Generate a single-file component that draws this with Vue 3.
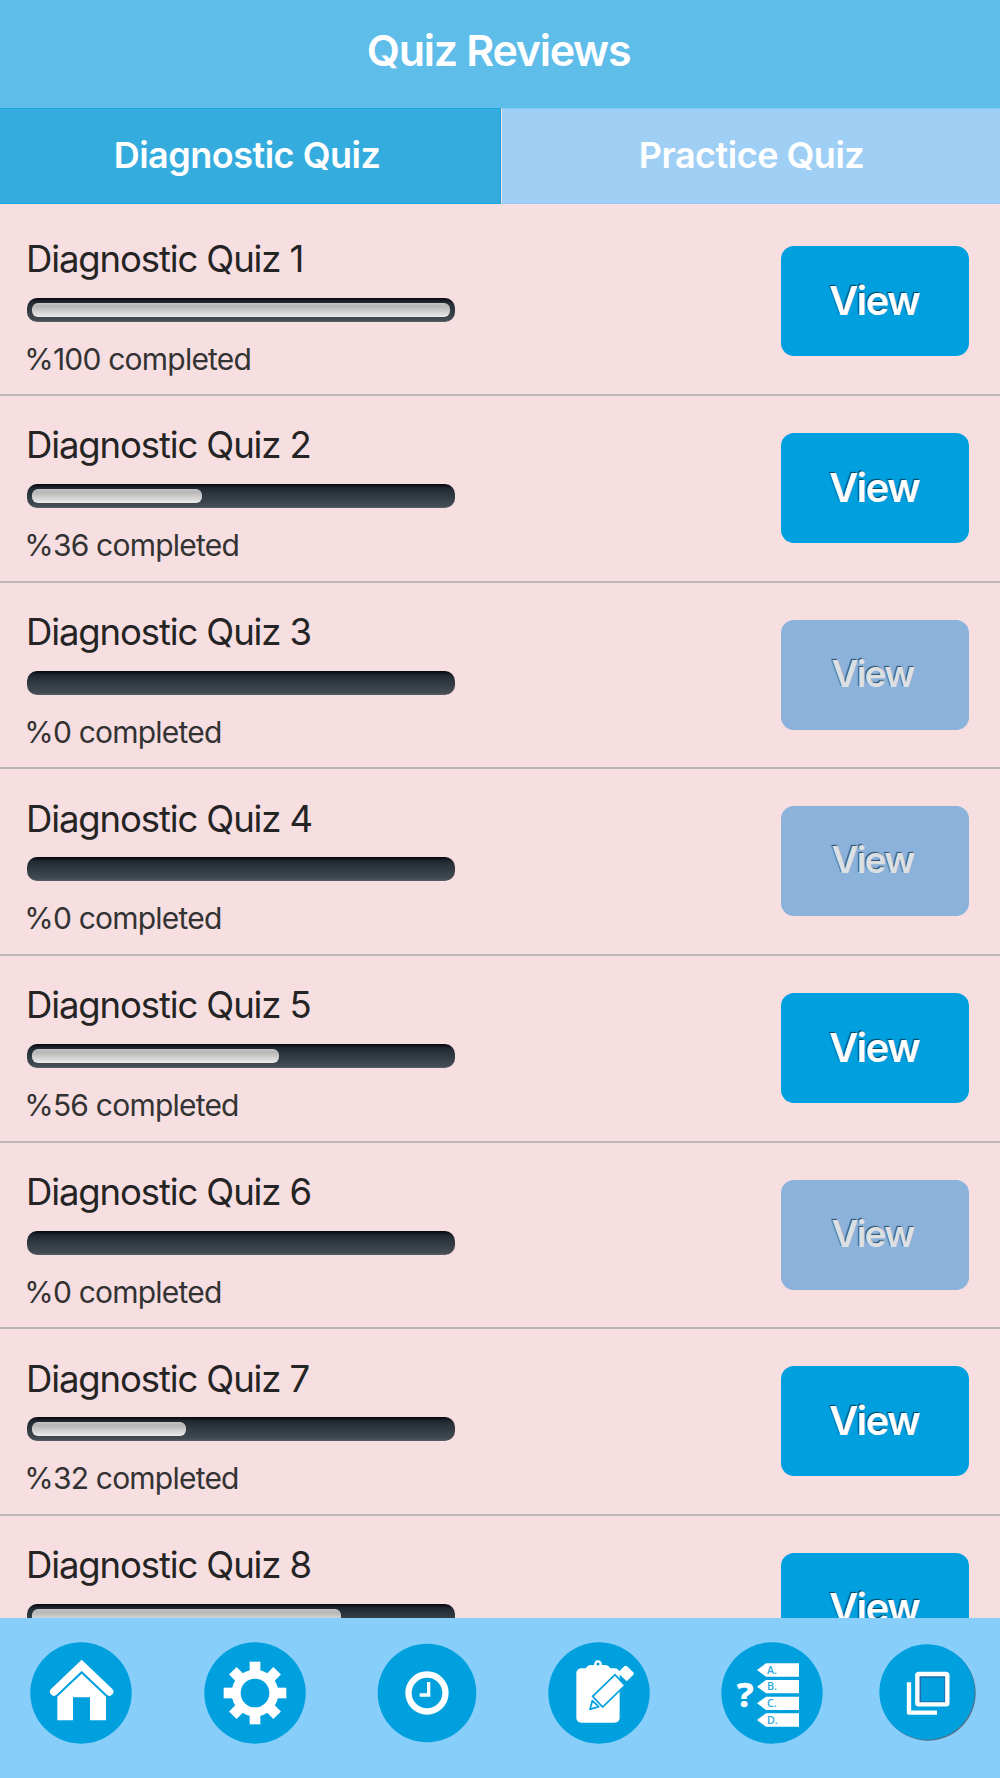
<script setup>
import { ref } from 'vue'

const activeTab = ref('diagnostic')

const tabs = [
  { id: 'diagnostic', label: 'Diagnostic Quiz' },
  { id: 'practice', label: 'Practice Quiz' }
]

const quizzes = [
  { id: 1, percent: 100, enabled: true },
  { id: 2, percent: 36, enabled: true },
  { id: 3, percent: 0, enabled: false },
  { id: 4, percent: 0, enabled: false },
  { id: 5, percent: 56, enabled: true },
  { id: 6, percent: 0, enabled: false },
  { id: 7, percent: 32, enabled: true },
  { id: 8, percent: 72, enabled: true }
]

const gearTeeth = [0, 45, 90, 135, 180, 225, 270, 315]
const answers = ['A.', 'B.', 'C.', 'D.']

const fillWidth = (percent) =>
  `calc(31px + (100% - 31px) * ${percent / 100})`
</script>

<template>
  <div class="screen">
    <header class="header">
      <h1>Quiz Reviews</h1>
    </header>

    <div class="tabs">
      <button
        v-for="tab in tabs"
        :key="tab.id"
        class="tab"
        :class="{ active: activeTab === tab.id }"
        @click="activeTab = tab.id"
      >
        <span>{{ tab.label }}</span>
      </button>
    </div>

    <main class="list">
      <div v-for="quiz in quizzes" :key="quiz.id" class="row">
        <div class="info">
          <div class="title">Diagnostic Quiz {{ quiz.id }}</div>
          <div class="bar">
            <div
              v-if="quiz.percent > 0"
              class="fill"
              :style="{ width: fillWidth(quiz.percent) }"
            ></div>
          </div>
          <div class="status">%{{ quiz.percent }} completed</div>
        </div>
        <button class="view" :disabled="!quiz.enabled">
          <span>View</span>
        </button>
      </div>
    </main>

    <nav class="nav">
      <svg class="icon" viewBox="0 0 306 306">
        <circle class="disc" cx="153" cy="153" r="152" />
        <path
          class="line"
          stroke-width="24"
          stroke-linecap="round"
          d="M72 149L155 70L238 149"
        />
        <path
          class="solid"
          d="M82 235V164L155 95L228 164V235H180V166H129V235Z"
        />
      </svg>

      <svg class="icon" viewBox="0 0 306 306">
        <circle class="disc" cx="153" cy="153" r="152" />
        <rect
          v-for="angle in gearTeeth"
          :key="angle"
          class="solid"
          x="137"
          y="59"
          width="32"
          height="40"
          :transform="`rotate(${angle} 153 153)`"
        />
        <circle
          class="line"
          cx="153"
          cy="153"
          r="56.5"
          stroke-width="27"
        />
      </svg>

      <svg class="icon" viewBox="0 0 306 306">
        <circle class="disc" cx="153" cy="153" r="148" />
        <circle
          class="line"
          cx="153"
          cy="153"
          r="55.5"
          stroke-width="19"
        />
        <path class="line" stroke-width="10" d="M158 120V159H131" />
      </svg>

      <svg class="icon" viewBox="0 0 306 306">
        <circle class="disc" cx="153" cy="153" r="152" />
        <rect
          class="solid"
          x="85"
          y="79"
          width="130"
          height="163"
          rx="15"
        />
        <path
          class="solid"
          d="M112 84Q116 69 129 69H138Q139 55 150 55Q161 55 162 69H171Q184 69 188 84Z"
        />
        <circle class="disc" cx="150" cy="66" r="4.5" />
        <path
          class="outlined"
          d="M134 163L164 195L231 130L201 98Z"
        />
        <path
          class="solid"
          d="M209 92L229 73Q233 70 237 73L256 91Q259 94 256 98L236 118Z"
        />
        <path
          class="outlined"
          stroke-linejoin="round"
          d="M126 202L133 176L152 194Z"
        />
      </svg>

      <svg class="icon" viewBox="0 0 306 306">
        <circle class="disc" cx="153" cy="153" r="152" />
        <text class="question" x="48" y="195">?</text>
        <g
          v-for="(answer, i) in answers"
          :key="answer"
          :transform="`translate(0 ${i * 50})`"
        >
          <path
            class="solid"
            d="M108 84L135 64H234V104H135Z"
          />
          <text class="answer" x="138" y="95">{{ answer }}</text>
        </g>
      </svg>

      <svg class="icon small" viewBox="0 0 288 288">
        <circle class="disc" cx="144" cy="144" r="143" />
        <rect
          class="inset"
          x="123"
          y="98"
          width="76"
          height="77"
        />
        <rect
          class="line"
          x="115"
          y="90"
          width="90"
          height="91"
          rx="4"
          stroke-width="13"
        />
        <path
          class="line"
          stroke-width="13"
          stroke-linejoin="round"
          d="M90 115V206H174"
        />
      </svg>
    </nav>
  </div>
</template>

<style>
body {
  margin: 0;
}
</style>

<style scoped>
.screen {
  height: 1778px;
  display: flex;
  flex-direction: column;
  overflow: hidden;
  background: #f7dee1;
  font-family: Inter, 'Liberation Sans', sans-serif;
}
button {
  border: none;
  padding: 0;
  font-family: inherit;
  cursor: pointer;
}
.header {
  flex: none;
  box-sizing: border-box;
  height: 108px;
  padding: 0 3px 9px 0;
  display: flex;
  align-items: center;
  justify-content: center;
  background: #5fbdea;
}
.header h1 {
  margin: 0;
  font-size: 43px;
  font-weight: 600;
  line-height: 52px;
  letter-spacing: -1.3px;
  color: #fff;
}
.tabs {
  flex: none;
  height: 96px;
  display: grid;
  grid-template-columns: 501px 1fr;
  gap: 1px;
}
.tab {
  padding: 0 0 2px 1px;
  background: #9fcff4;
  border-top: 1px solid #83c8f3;
  border-bottom: 1px solid #8fcdf6;
  color: #fff;
  font-size: 36px;
  font-weight: 600;
  line-height: 44px;
  letter-spacing: -0.5px;
}
.tab.active {
  background: #35acde;
  border: 1px solid #1ba5de;
  border-left: none;
  padding-right: 7px;
}
.list {
  flex: 1;
  min-height: 0;
  overflow: hidden;
  padding-top: 5.33px;
}
.row {
  box-sizing: border-box;
  height: 186.667px;
  padding: 0 31px 0 26.6px;
  display: flex;
  justify-content: space-between;
  border-bottom: 2px solid #bdb5b7;
}
.info {
  padding-top: 27.3px;
}
.title {
  margin-left: -0.6px;
  font-size: 36.5px;
  line-height: 44px;
  letter-spacing: -1.12px;
  color: #242424;
}
.bar {
  box-sizing: border-box;
  width: 428px;
  height: 24px;
  margin-top: 16.9px;
  padding: 5px;
  border-radius: 10px;
  background: linear-gradient(#05070b 0, #1f2730 4px, #2b343c 9px, #434b53 22px, #59616a 24px);
}
.fill {
  height: 14px;
  border-radius: 6px;
  background: linear-gradient(#c4c4c4 0, #b5b5b5 3px, #ececec 14px);
}
.status {
  margin: 19px 0 0 -2.4px;
  font-size: 30px;
  line-height: 36px;
  letter-spacing: -0.78px;
  color: #333;
}
.view {
  width: 188px;
  height: 110px;
  margin-top: 37px;
  padding-right: 2px;
  border-radius: 13px;
  background: #00a0df;
  color: #fff;
  font-size: 40px;
  font-weight: 600;
  line-height: 48px;
  letter-spacing: -1.5px;
  text-shadow: -1px -1px 1px rgba(0, 0, 0, 0.6);
}
.view:disabled {
  padding: 0 5px 2px 0;
  background: #8ab2da;
  color: #dde0e3;
  font-size: 37px;
  letter-spacing: -1.8px;
  cursor: default;
  text-shadow: -1px -1px 1px rgba(30, 50, 70, 0.8);
}
.nav {
  flex: none;
  box-sizing: border-box;
  height: 160px;
  padding: 24px 0 0 30.4px;
  display: grid;
  grid-template-columns: 173.3px 172.3px 172.3px 173px 158px 96px;
  justify-content: start;
  align-items: start;
  background: #87cefb;
}
.icon {
  display: block;
  width: 102px;
  height: 102px;
}
.icon.small {
  width: 96px;
  height: 96px;
  margin-top: 2px;
  filter: drop-shadow(1px 1px 0.5px rgba(60, 70, 80, 0.7));
}
.disc {
  fill: #00a0df;
}
.solid {
  fill: #fff;
}
.line {
  fill: none;
  stroke: #fff;
}
.outlined {
  fill: #fff;
  stroke: #00a0df;
  stroke-width: 5;
}
.inset {
  fill: none;
  stroke: #2568a8;
  stroke-width: 6;
}
.question {
  fill: #fff;
  stroke: #fff;
  stroke-width: 2;
  font-family: 'Open Sans', sans-serif;
  font-size: 104px;
  font-weight: 700;
}
.answer {
  fill: #2aa9df;
  font-family: 'Open Sans', sans-serif;
  font-size: 32px;
  font-weight: 600;
}
</style>
